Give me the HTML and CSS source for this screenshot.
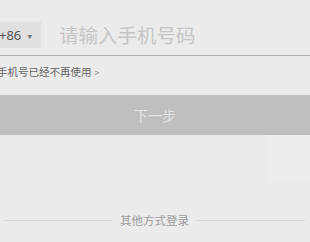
FILE: index.html
```html
<!DOCTYPE html>
<html lang="zh-CN">
<head>
    <meta charset="UTF-8">
    <title>登录</title>
    <link rel="stylesheet" href="styles.css">
</head>
<body>
    <div class="login">
        <div class="phone-row">
            <div class="country">+86 <span class="arrow">▼</span></div>
            <input class="phone-input" type="text" placeholder="请输入手机号码">
        </div>
        <a class="lost-phone" href="#">手机号已经不再使用 <span class="chev">&gt;</span></a>
        <button class="next-btn">下一步</button>
        <div class="spacer"><div class="ghost"></div></div>
        <div class="other-login">
            <span class="line"></span>
            <span class="other-text">其他方式登录</span>
            <span class="line"></span>
        </div>
    </div>
</body>
</html>
```

FILE: styles.css
```css
* {
    box-sizing: border-box;
    margin: 0;
    padding: 0;
}

body {
    background-color: #ebebeb;
    font-family: "Noto Sans", "Noto Sans CJK SC", sans-serif;
    width: 310px;
    height: 242px;
    overflow: hidden;
}

.login {
    padding-top: 22px;
}

.phone-row {
    display: flex;
    align-items: flex-start;
    height: 26px;
    border-bottom: 1px solid #acacac;
    padding-bottom: 7px;
    box-sizing: content-box;
}

.country {
    display: flex;
    align-items: center;
    height: 26px;
    width: 44px;
    margin-left: -3px;
    padding-left: 2px;
    background-color: #e0e0e0;
    color: #555;
    font-size: 13px;
}

.arrow {
    font-size: 5px;
    color: #777;
    margin-left: 6px;
}

.phone-input {
    border: none;
    background: transparent;
    outline: none;
    margin-left: 18px;
    height: 26px;
    font-family: inherit;
    font-size: 19.5px;
    width: 230px;
}

.phone-input::placeholder {
    color: #c6c6c6;
}

.lost-phone {
    display: block;
    margin-top: 9px;
    margin-left: -3px;
    font-size: 10.5px;
    line-height: 14px;
    color: #666;
    text-decoration: none;
}

.chev {
    color: #888;
    font-size: 9px;
}

.next-btn {
    display: block;
    width: 100%;
    height: 40px;
    margin-top: 15px;
    border: none;
    background-color: #bfbfbf;
    color: #e4e4e4;
    font-family: inherit;
    font-size: 14px;
}

.spacer {
    display: flex;
    justify-content: flex-end;
    height: 77px;
}

.ghost {
    width: 42px;
    height: 47px;
    background-color: #ededed;
}

.other-login {
    display: flex;
    align-items: center;
    padding: 0 5px 0 4px;
    gap: 8px;
}

.line {
    flex: 1;
    height: 1px;
    background-color: #d9d9d9;
}

.other-text {
    font-size: 11.5px;
    color: #9d9d9d;
}
```
